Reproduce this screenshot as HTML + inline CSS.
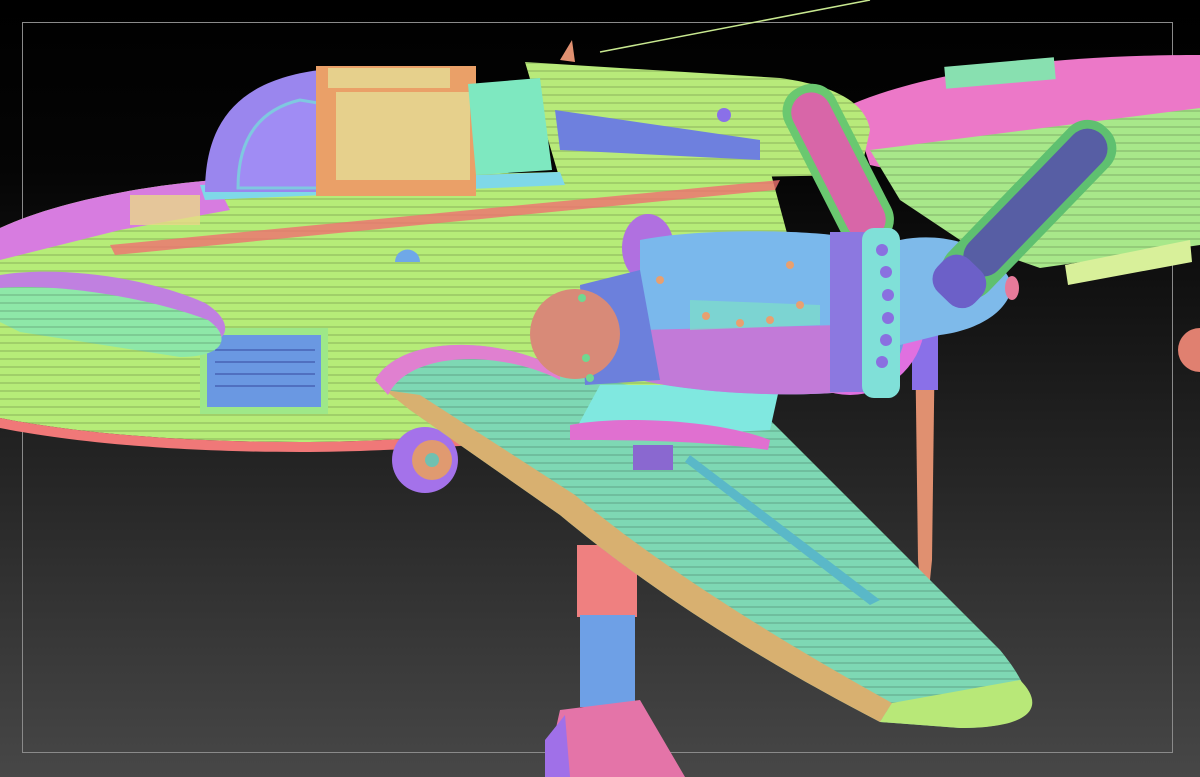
<!DOCTYPE html>
<html><head><meta charset="utf-8"><style>
html,body{margin:0;padding:0;width:1200px;height:777px;overflow:hidden;background:linear-gradient(#000 0%,#050505 22%,#262626 62%,#474747 100%);}
svg{position:absolute;left:0;top:0}
</style></head><body>
<svg width="1200" height="777" viewBox="0 0 1200 777">
<defs>
<pattern id="ln" width="8" height="8" patternUnits="userSpaceOnUse"><rect width="8" height="8" fill="none"/><line x1="0" y1="7" x2="8" y2="7" stroke="#000" stroke-opacity="0.12" stroke-width="2"/></pattern>
</defs>
<rect x="22.5" y="22.5" width="1150" height="730" fill="none" stroke="#8a8a8a" stroke-width="1"/>
<line x1="600" y1="52" x2="870" y2="0" stroke="#c8e890" stroke-width="1.5"/>
<path d="M560,60 L572,40 L575,62Z" fill="#e09070"/>
<!-- right back fuselage -->
<path d="M850,105 C950,62 1100,55 1200,55 L1200,150 L960,185 L870,165 Z" fill="#ec78c8"/>
<path d="M870,150 L1200,108 L1200,245 L1040,268 L960,240 L900,200Z" fill="#a8e88a"/>
<path d="M870,150 L1200,108 L1200,245 L1040,268 L960,240 L900,200Z" fill="url(#ln)"/>
<rect x="945" y="62" width="110" height="22" fill="#88e0b0" transform="rotate(-5 1000 73)"/>
<polygon points="1065,265 1190,240 1192,262 1068,285" fill="#d8f09a"/>
<circle cx="1200" cy="350" r="22" fill="#e08070"/>
<!-- upper fuselage green behind canopy -->
<path d="M525,62 L780,78 C830,85 865,100 870,130 L860,175 L560,180 Z" fill="#b8ea7a"/>
<path d="M525,62 L780,78 C830,85 865,100 870,130 L860,175 L560,180 Z" fill="url(#ln)"/>
<path d="M555,110 L760,140 L760,160 L560,150Z" fill="#6e80de"/>
<!-- main fuselage -->
<path d="M0,228 C60,200 150,185 215,180 L560,172 L770,170 L805,300 L765,412 C600,425 420,442 300,442 C150,442 50,428 0,418 Z" fill="#b6ec78"/>
<path d="M0,228 C60,200 150,185 215,180 L560,172 L770,170 L805,300 L765,412 C600,425 420,442 300,442 C150,442 50,428 0,418 Z" fill="url(#ln)"/>
<path d="M0,228 C60,200 150,185 215,180 L230,210 L120,230 L0,260Z" fill="#d77ce0"/>
<rect x="130" y="195" width="70" height="30" fill="#e8d888" opacity="0.8"/>
<path d="M110,245 L780,180 L775,190 L115,255Z" fill="#f07070" opacity="0.8"/>
<path d="M200,185 L560,172 L565,185 L205,200Z" fill="#7fd8e8"/>
<path d="M0,418 C50,428 150,442 300,442 C420,442 600,425 765,412 L765,422 C600,436 420,452 300,452 C150,452 50,438 0,428Z" fill="#f07878"/>
<!-- canopy -->
<path d="M205,192 C205,120 240,80 320,70 L335,192 Z" fill="#9a86ee"/>
<path d="M238,188 C238,140 258,110 300,100 L330,105 L333,188 Z" fill="#a08cf4" stroke="#7fc8e0" stroke-width="3"/>
<rect x="316" y="66" width="160" height="130" fill="#eaa068"/>
<rect x="336" y="92" width="134" height="88" fill="#e6d08c"/>
<rect x="328" y="68" width="122" height="20" fill="#e6d08c"/>
<path d="M468,84 L540,78 L552,170 L476,175Z" fill="#7ee8c0"/>
<circle cx="724" cy="115" r="7" fill="#8a70e8"/>
<!-- porthole -->
<ellipse cx="648" cy="248" rx="26" ry="34" fill="#b070e0"/>
<path d="M395,262 A12,12 0 0 1 420,262Z" fill="#6fa8e8"/>
<!-- vent panel -->
<rect x="200" y="328" width="128" height="86" fill="#9ee888"/>
<rect x="207" y="335" width="114" height="72" fill="#6a98e2"/>
<g stroke="#5070c0" stroke-width="2"><line x1="215" y1="350" x2="315" y2="350"/><line x1="215" y1="362" x2="315" y2="362"/><line x1="215" y1="374" x2="315" y2="374"/><line x1="215" y1="386" x2="315" y2="386"/></g>
<!-- tail wing -->
<path d="M0,275 C60,265 150,278 205,303 C235,322 230,342 200,347 L0,322 Z" fill="#c080e0"/>
<path d="M0,288 C60,283 150,298 208,320 C232,337 225,357 180,357 L20,332 L0,322Z" fill="#8ee8a8"/>
<path d="M0,288 C60,283 150,298 208,320 C232,337 225,357 180,357 L20,332 L0,322Z" fill="url(#ln)"/>
<!-- wheel -->
<circle cx="425" cy="460" r="33" fill="#a472ea"/>
<circle cx="432" cy="460" r="20" fill="#e09a70"/>
<circle cx="432" cy="460" r="7" fill="#70c0b0"/>
<!-- strut -->
<path d="M915,330 L935,330 L932,560 L930,580 L920,580 L918,560Z" fill="#e09070"/>
<rect x="912" y="330" width="26" height="60" fill="#8a70e8"/>
<!-- landing gear -->
<rect x="577" y="545" width="60" height="72" fill="#ef8080"/>
<rect x="580" y="615" width="55" height="92" fill="#6ea0e6"/>
<path d="M560,710 L640,700 L685,777 L545,777 Z" fill="#e474a8"/>
<path d="M545,740 L565,715 L570,777 L545,777Z" fill="#a070e8"/>
<!-- wing -->
<path d="M375,380 C400,335 500,335 560,370 L765,415 L1000,650 C1045,705 1035,728 960,728 L880,722 C760,660 650,590 560,515 L410,410 Z" fill="#7ed8b4"/>
<path d="M375,380 C400,335 500,335 560,370 L765,415 L1000,650 C1045,705 1035,728 960,728 L880,722 C760,660 650,590 560,515 L410,410 Z" fill="url(#ln)"/>
<path d="M385,390 L410,410 L560,515 C650,590 760,660 880,722 L892,703 C760,630 645,555 575,495 L420,395Z" fill="#d8b070"/>
<path d="M880,722 L960,728 C1035,728 1045,705 1020,680 L892,703Z" fill="#b8e878"/>
<path d="M690,455 L880,600 L870,605 L685,462Z" fill="#5ab8c8"/>
<rect x="633" y="445" width="40" height="25" fill="#8a68d0"/>
<path d="M375,380 C400,335 500,335 560,370 L560,380 C500,350 410,350 388,395Z" fill="#e080d0"/>
<!-- engine mount -->
<path d="M600,385 L780,385 L770,430 L570,440 Z" fill="#80e8e0"/>
<path d="M570,425 C620,415 720,420 770,440 L768,450 C700,440 620,440 570,440Z" fill="#e070d0"/>
<!-- back engine -->
<circle cx="850" cy="320" r="75" fill="#e070e0"/>
<circle cx="845" cy="330" r="60" fill="#6fa0e0"/>
<!-- propeller pink blade -->
<g transform="rotate(-27 838 165)"><rect x="810" y="78" width="56" height="175" rx="26" fill="#6ac870"/><rect x="818" y="86" width="40" height="160" rx="20" fill="#d866a8"/></g>
<!-- engine cylinder -->
<path d="M640,240 C700,228 800,230 840,236 L845,392 C780,398 690,392 640,380Z" fill="#7ab8ec"/>
<path d="M640,330 L840,325 L845,392 C780,398 690,392 640,380Z" fill="#c27ad8"/>
<path d="M690,300 L820,305 L820,325 L690,330Z" fill="#7ee0c8" opacity="0.7"/>
<rect x="830" y="232" width="35" height="160" fill="#8c78e0"/>
<rect x="862" y="228" width="38" height="170" rx="12" fill="#80e0d8"/>
<g fill="#8a70e0"><circle cx="882" cy="250" r="6"/><circle cx="886" cy="272" r="6"/><circle cx="888" cy="295" r="6"/><circle cx="888" cy="318" r="6"/><circle cx="886" cy="340" r="6"/><circle cx="882" cy="362" r="6"/></g>
<path d="M900,240 C950,230 1000,250 1012,285 C1010,310 980,330 940,335 L900,345Z" fill="#7ebaea"/>
<ellipse cx="1012" cy="288" rx="7" ry="12" fill="#e67a9a"/>
<!-- blue blade -->
<g transform="rotate(44 1025 212)"><rect x="998" y="95" width="56" height="225" rx="26" fill="#5fc070"/><rect x="1006" y="103" width="40" height="190" rx="20" fill="#575ea4"/><rect x="1000" y="285" width="52" height="45" rx="18" fill="#6c60c8"/></g>
<!-- nose -->
<path d="M580,285 L640,270 L660,380 L585,385Z" fill="#6c80dc"/>
<circle cx="575" cy="334" r="45" fill="#d88a78"/>
<g fill="#e8a070"><circle cx="706" cy="316" r="4"/><circle cx="740" cy="323" r="4"/><circle cx="770" cy="320" r="4"/><circle cx="800" cy="305" r="4"/><circle cx="790" cy="265" r="4"/><circle cx="660" cy="280" r="4"/></g>
<g fill="#70d890"><circle cx="582" cy="298" r="4"/><circle cx="586" cy="358" r="4"/><circle cx="590" cy="378" r="4"/></g>
</svg>
</body></html>
